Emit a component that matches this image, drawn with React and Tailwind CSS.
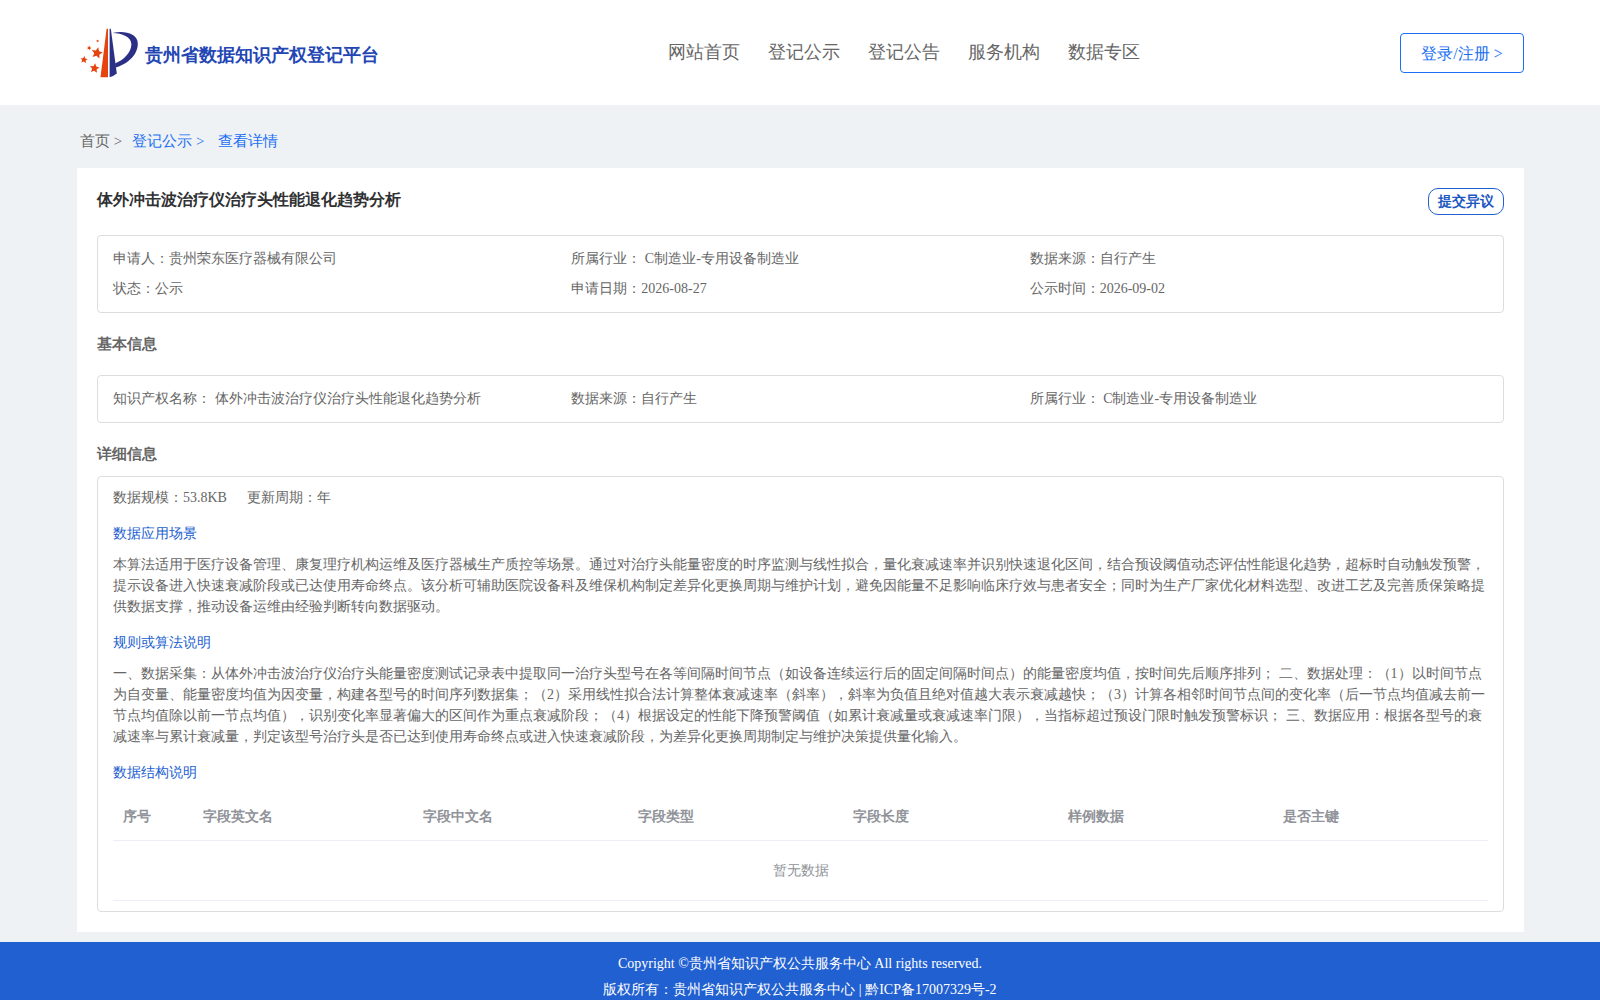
import React from "react";

const navItems = ["网站首页", "登记公示", "登记公告", "服务机构", "数据专区"];

const summary = [
  "申请人：贵州荣东医疗器械有限公司",
  "所属行业： C制造业-专用设备制造业",
  "数据来源：自行产生",
  "状态：公示",
  "申请日期：2026-08-27",
  "公示时间：2026-09-02",
];

const basicInfo = [
  "知识产权名称： 体外冲击波治疗仪治疗头性能退化趋势分析",
  "数据来源：自行产生",
  "所属行业： C制造业-专用设备制造业",
];

const columns = ["序号", "字段英文名", "字段中文名", "字段类型", "字段长度", "样例数据", "是否主键"];

const scene =
  "本算法适用于医疗设备管理、康复理疗机构运维及医疗器械生产质控等场景。通过对治疗头能量密度的时序监测与线性拟合，量化衰减速率并识别快速退化区间，结合预设阈值动态评估性能退化趋势，超标时自动触发预警，提示设备进入快速衰减阶段或已达使用寿命终点。该分析可辅助医院设备科及维保机构制定差异化更换周期与维护计划，避免因能量不足影响临床疗效与患者安全；同时为生产厂家优化材料选型、改进工艺及完善质保策略提供数据支撑，推动设备运维由经验判断转向数据驱动。";

const rules =
  "一、数据采集：从体外冲击波治疗仪治疗头能量密度测试记录表中提取同一治疗头型号在各等间隔时间节点（如设备连续运行后的固定间隔时间点）的能量密度均值，按时间先后顺序排列； 二、数据处理：（1）以时间节点为自变量、能量密度均值为因变量，构建各型号的时间序列数据集；（2）采用线性拟合法计算整体衰减速率（斜率），斜率为负值且绝对值越大表示衰减越快；（3）计算各相邻时间节点间的变化率（后一节点均值减去前一节点均值除以前一节点均值），识别变化率显著偏大的区间作为重点衰减阶段；（4）根据设定的性能下降预警阈值（如累计衰减量或衰减速率门限），当指标超过预设门限时触发预警标识； 三、数据应用：根据各型号的衰减速率与累计衰减量，判定该型号治疗头是否已达到使用寿命终点或进入快速衰减阶段，为差异化更换周期制定与维护决策提供量化输入。";

const Star = ({ x, y, r, turn = 0 }) => (
  <polygon
    points="0,-10 2.9,-3.8 9.6,-3.1 4.6,1.5 6,8.2 0,4.8 -6,8.2 -4.6,1.5 -9.6,-3.1 -2.9,-3.8"
    fill="#e5440f"
    transform={`translate(${x} ${y}) rotate(${turn}) scale(${r / 10})`}
  />
);

const Logo = () => (
  <svg width="58" height="50" viewBox="0 0 58 50" aria-hidden="true">
    <path d="M26.6 0.8 L28 0.8 L28 49.3 L20.5 49.3 Z" fill="#e5440f" />
    <path d="M29.6 0.8 L30.8 0.8 L36.8 45.5 Q33.5 48.3 29.6 49.2 Z" fill="#2b2f86" />
    <path
      d="M32.6 5 C43 2.5 57.6 4.5 57.8 15.5 C58 28 46 36.5 35.6 39.6 L35 35.4 C43 32.5 51 25 51.4 16.5 C51.6 8.5 42 5.4 32.6 5 Z"
      fill="#2b2f86"
    />
    <Star x={17} y={25} r={5.8} turn={12} />
    <Star x={14.5} y={40.3} r={5} turn={8} />
    <Star x={4} y={31.8} r={3.8} turn={8} />
    <Star x={9.2} y={20} r={2.4} turn={20} />
    <Star x={17.6} y={13} r={1.6} />
  </svg>
);

const InfoBox = ({ items }) => (
  <ul className="grid grid-cols-3 rounded border border-[#dcdddf] px-[15px] py-2 leading-[30px]">
    {items.map((item) => (
      <li key={item}>{item}</li>
    ))}
  </ul>
);

const SubTitle = ({ children }) => <h3 className="py-[5px] leading-[21px] text-[#2160d0]">{children}</h3>;

const App = () => {
  return (
    <div className="flex min-h-screen flex-col bg-[#eef2f5] font-['Liberation_Serif',serif] text-sm text-[#666666]">
      {/* Header */}
      <header className="flex h-[105px] items-center justify-between bg-white pr-19 pl-[77px]">
        <a href="#" className="flex w-[331px] items-center gap-[7px] pl-[3px]">
          <Logo />
          <span className="pt-1 text-lg font-bold text-[#2346b4]">贵州省数据知识产权登记平台</span>
        </a>
        <nav className="flex gap-7 pb-[2px] text-lg">
          {navItems.map((item) => (
            <a key={item} href="#">
              {item}
            </a>
          ))}
        </nav>
        <button className="h-10 w-[124px] rounded border border-[#1b6ff2] pt-[2px] text-base text-[#1b6ff2]">
          登录/注册 &gt;
        </button>
      </header>

      <main className="pr-19 pb-[10px] pl-[77px]">
        {/* Breadcrumb */}
        <nav className="flex h-[63px] items-center pt-[10px] pl-[3px] text-[15px] text-[#1b6ff2]">
          <a href="#" className="mr-[10px] text-[#666666]">首页 &gt;</a>
          <a href="#" className="mr-[14px]">登记公示 &gt;</a>
          <a href="#">查看详情</a>
        </nav>

        <section className="bg-white p-5">
          <div className="flex h-[47px] items-start justify-between">
            <h1 className="text-base font-bold text-[#303133]">体外冲击波治疗仪治疗头性能退化趋势分析</h1>
            <button className="h-[27px] rounded-[10px] border border-[#2160d0] px-[9px] font-bold text-[#1c56c0]">
              提交异议
            </button>
          </div>

          <InfoBox items={summary} />

          <h2 className="py-5 text-[15px] leading-[22px] font-bold">基本信息</h2>
          <InfoBox items={basicInfo} />

          <h2 className="pt-5 pb-[11px] text-[15px] leading-[22px] font-bold">详细信息</h2>
          <div className="rounded border border-[#dcdddf] px-[15px] py-[10px]">
            <p className="mb-[10px] flex gap-5 leading-[21px]">
              <span>数据规模：53.8KB</span>
              <span>更新周期：年</span>
            </p>
            <SubTitle>数据应用场景</SubTitle>
            <p className="mt-[5px] mb-[10px] leading-[21px]">{scene}</p>
            <SubTitle>规则或算法说明</SubTitle>
            <p className="mt-[5px] mb-[10px] leading-[21px]">{rules}</p>
            <SubTitle>数据结构说明</SubTitle>

            {/* Fields table */}
            <table className="mt-1 w-full table-fixed text-[#909399]">
              <thead>
                <tr className="h-12 border-b border-[#ebeef5]">
                  {columns.map((name, i) => (
                    <th
                      key={name}
                      className={`px-[10px] pt-[2px] text-left font-bold ${i === 0 ? "w-20" : ""} ${i === 1 ? "w-[220px]" : ""}`}
                    >
                      {name}
                    </th>
                  ))}
                </tr>
              </thead>
              <tbody>
                <tr className="h-[60px] border-b border-[#ebeef5]">
                  <td colSpan={columns.length} className="pt-[2px] text-center">
                    暂无数据
                  </td>
                </tr>
              </tbody>
            </table>
          </div>
        </section>
      </main>

      {/* Footer */}
      <footer className="flex-1 bg-[#2160d0] pt-[9px] text-center leading-[26px] text-white">
        <p>Copyright ©贵州省知识产权公共服务中心 All rights reserved.</p>
        <p>版权所有：贵州省知识产权公共服务中心 | 黔ICP备17007329号-2</p>
      </footer>
    </div>
  );
};

export default App;
